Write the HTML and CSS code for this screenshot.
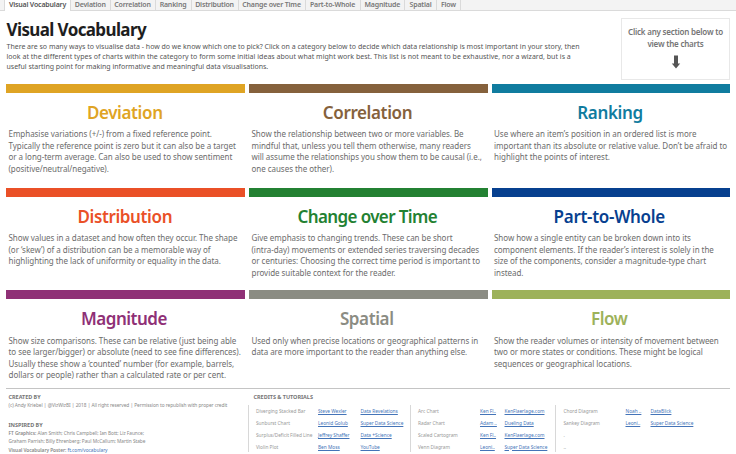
FILE: index.html
```html
<!DOCTYPE html>
<html lang="en">
<head>
<meta charset="utf-8">
<title>Visual Vocabulary</title>
<link rel="stylesheet" href="styles.css">
</head>
<body>
<div class="page">
<nav class="tabs">
<span class="tab active w1">Visual Vocabulary</span><span class="tab w2">Deviation</span><span class="tab w3">Correlation</span><span class="tab w4">Ranking</span><span class="tab w5">Distribution</span><span class="tab w6">Change over Time</span><span class="tab w7">Part-to-Whole</span><span class="tab w8">Magnitude</span><span class="tab w9">Spatial</span><span class="tab w10">Flow</span>
</nav>
<header class="intro">
<div class="intro-text">
<h1>Visual Vocabulary</h1>
<p>There are so many ways to visualise data - how do we know which one to pick? Click on a category below to decide which data relationship is most important in your story, then<br><span class="loose">look at the different types of charts within the category to form some initial ideas about what might work best. This list is not meant to be exhaustive, nor a wizard, but is a</span><br>useful starting point for making informative and meaningful data visualisations.</p>
</div>
<div class="hint">Click any section below to<br>view the charts
<svg class="arrow" viewBox="0 0 10 14"><path d="M3 .5h4v8h2.200L5 13.500.8 8.500H3z"/></svg>
</div>
</header>
<main class="grid">
<section class="card deviation"><h2>Deviation</h2><p>Emphasise variations (+/-) from a fixed reference point.<br>Typically the reference point is zero but it can also be a target<br>or a long-term average. Can also be used to show sentiment<br>(positive/neutral/negative).</p></section>
<section class="card correlation"><h2>Correlation</h2><p>Show the relationship between two or more variables. Be<br>mindful that, unless you tell them otherwise, many readers<br>will assume the relationships you show them to be causal (i.e.,<br>one causes the other).</p></section>
<section class="card ranking"><h2>Ranking</h2><p>Use where an item’s position in an ordered list is more<br>important than its absolute or relative value. Don’t be afraid to<br>highlight the points of interest.</p></section>
<section class="card distribution"><h2>Distribution</h2><p>Show values in a dataset and how often they occur. The shape<br>(or ‘skew’) of a distribution can be a memorable way of<br>highlighting the lack of uniformity or equality in the data.</p></section>
<section class="card change"><h2>Change over Time</h2><p>Give emphasis to changing trends. These can be short<br>(intra-day) movements or extended series traversing decades<br>or centuries: Choosing the correct time period is important to<br>provide suitable context for the reader.</p></section>
<section class="card part"><h2>Part-to-Whole</h2><p>Show how a single entity can be broken down into its<br>component elements. If the reader’s interest is solely in the<br>size of the components, consider a magnitude-type chart<br>instead.</p></section>
<section class="card magnitude"><h2>Magnitude</h2><p>Show size comparisons. These can be relative (just being able<br>to see larger/bigger) or absolute (need to see fine differences).<br>Usually these show a ‘counted’ number (for example, barrels,<br>dollars or people) rather than a calculated rate or per cent.</p></section>
<section class="card spatial"><h2>Spatial</h2><p>Used only when precise locations or geographical patterns in<br>data are more important to the reader than anything else.</p></section>
<section class="card flow"><h2>Flow</h2><p>Show the reader volumes or intensity of movement between<br>two or more states or conditions. These might be logical<br>sequences or geographical locations.</p></section>
</main>
<footer class="footer">
<div class="about">
<h3>CREATED BY</h3>
<p>(c) Andy Kriebel | @VizWizBI | 2018 | All right reserved | Permission to republish with proper credit</p>
<h3 class="inspired">INSPIRED BY</h3>
<p class="people"><span class="strong">FT Graphics:</span> Alan Smith; Chris Campbell; Ian Bott; Liz Faunce;<br>Graham Parrish; Billy Ehrenberg; Paul McCallum; Martin Stabe</p>
<p class="poster"><span class="strong">Visual Vocabulary Poster:</span> <a>ft.com/vocabulary</a></p>
</div>
<div class="credits">
<h3>CREDITS &amp; TUTORIALS</h3>
<div class="lists">
<div class="list first">
<span>Diverging Stacked Bar</span><a>Steve Wexler</a><a>Data Revelations</a>
<span>Sunburst Chart</span><a>Leonid Golub</a><a>Super Data Science</a>
<span>Surplus/Deficit Filled Line</span><a>Jeffrey Shaffer</a><a>Data +Science</a>
<span>Violin Plot</span><a>Ben Moss</a><a>YouTube</a>
</div>
<div class="list second">
<span>Arc Chart</span><a>Ken Fl..</a><a>KenFlaerlage.com</a>
<span>Radar Chart</span><a>Adam ..</a><a>Dueling Data</a>
<span>Scaled Cartogram</span><a>Ken Fl..</a><a>KenFlaerlage.com</a>
<span>Venn Diagram</span><a>Leoni..</a><a>Super Data Science</a>
</div>
<div class="list third">
<span>Chord Diagram</span><a>Noah ..</a><a>DataBlick</a>
<span>Sankey Diagram</span><a>Leoni..</a><a>Super Data Science</a>
<span>.</span><span></span><span></span>
<span>..</span><span></span><span></span>
</div>
</div>
</div>
</footer>
</div>
</body>
</html>
```
FILE: styles.css
```css
* { box-sizing: border-box; margin: 0; padding: 0; }
body { background: #fff; font-family: "Noto Sans", sans-serif; color: #666; }
.page { width: 736px; height: 454px; overflow: hidden; white-space: nowrap; }
.tabs { display: flex; height: 11px; padding-left: 4px; background: #f3f3f3; border-bottom: 1px solid #dadada; font-size: 7px; letter-spacing: -.18px; line-height: 10px; font-weight: 600; }
.tab { height: 10px; text-align: center; border-right: 1px solid #dadada; color: #777; }
.active { height: 11px; background: #fff; color: #555; border-left: 1px solid #dadada; }
.w1 { width: 67px; } .w2 { width: 39.500px; } .w3 { width: 45px; } .w4 { width: 36px; } .w5 { width: 47px; }
.w6 { width: 67px; } .w7 { width: 55px; } .w8 { width: 44.500px; } .w9 { width: 32px; } .w10 { width: 24px; }
.intro { display: flex; justify-content: space-between; height: 72.500px; padding: 7px 6px 0; }
h1 { font-size: 17px; line-height: 24px; font-weight: 700; color: #1e1e1e; letter-spacing: -.62px; }
.intro p { font-size: 7px; line-height: 10px; margin-top: 0; color: #555; letter-spacing: -.01px; }
.intro p .loose { letter-spacing: .026px; }
.intro-text { padding-left: .5px; }
.hint { width: 109px; height: 62px; border: 1px solid #e8e8e8; padding-top: 7px; text-align: center; font-size: 8px; letter-spacing: -.22px; line-height: 11.600px; font-weight: 600; color: #757575; }
.arrow { display: block; width: 10px; height: 14px; margin: 6px auto 0; fill: #555; }
.grid { display: grid; grid-template-columns: 239px 238.500px 238.500px; column-gap: 4px; grid-template-rows: 104px 102.500px 98px; padding-left: 6px; }
.card { border-top: 9px solid; }
.card h2 { font-size: 17px; font-weight: 600; line-height: 24px; margin-top: 8px; text-align: center; letter-spacing: -.38px; padding-right: 1.500px; }
.card.change h2 { letter-spacing: -.62px; padding-right: 2px; }
.card.part h2, .card.spatial h2, .card.flow h2 { padding-right: 3px; }
.card.part h2 { letter-spacing: -.3px; }
.card.magnitude h2 { letter-spacing: -.5px; padding-right: 3px; }
.card p { color: #6c6c6c; font-size: 8px; letter-spacing: -.04px; line-height: 11.650px; padding-left: 2.500px; margin-top: 3.500px; }
.card.ranking p { letter-spacing: -.015px; }
.deviation { color: #dfa424; } .correlation { color: #85613c; } .ranking { color: #107c9f; }
.distribution { color: #ea5027; } .change { color: #238132; } .part { color: #07408f; }
.magnitude { color: #8f3076; } .spatial { color: #8b8c83; } .flow { color: #9db25a; }
.footer { display: flex; height: 66px; margin: 0 6px; border-top: 1px solid #c4c4c4; }
.about { width: 241.500px; padding-left: 2.500px; }
h3 { font-size: 5.500px; line-height: 8px; font-weight: 700; color: #777; margin-top: 3.500px; letter-spacing: -.03px; }
.about p { font-size: 4.800px; letter-spacing: -.045px; line-height: 8px; color: #888; }
.about .inspired { margin-top: 12px; }
.about .poster { margin-top: 1.500px; }
.strong { font-weight: 600; }
a { color: #4474b8; text-decoration: underline; }
.poster a { text-decoration: none; }
.credits h3 { padding-left: 6px; }
.lists { display: flex; margin-top: 4.500px; }
.list { display: grid; grid-auto-rows: 11.850px; height: 47px; padding-left: 7.500px; border-left: 1px solid #d8d8d8; font-size: 4.800px; letter-spacing: -.02px; line-height: 13px; color: #999; }
.first { width: 162px; grid-template-columns: 62px 42.500px auto; }
.second { width: 145.500px; grid-template-columns: 62px 24.500px auto; }
.third { grid-template-columns: 62px 25px auto; }
```
